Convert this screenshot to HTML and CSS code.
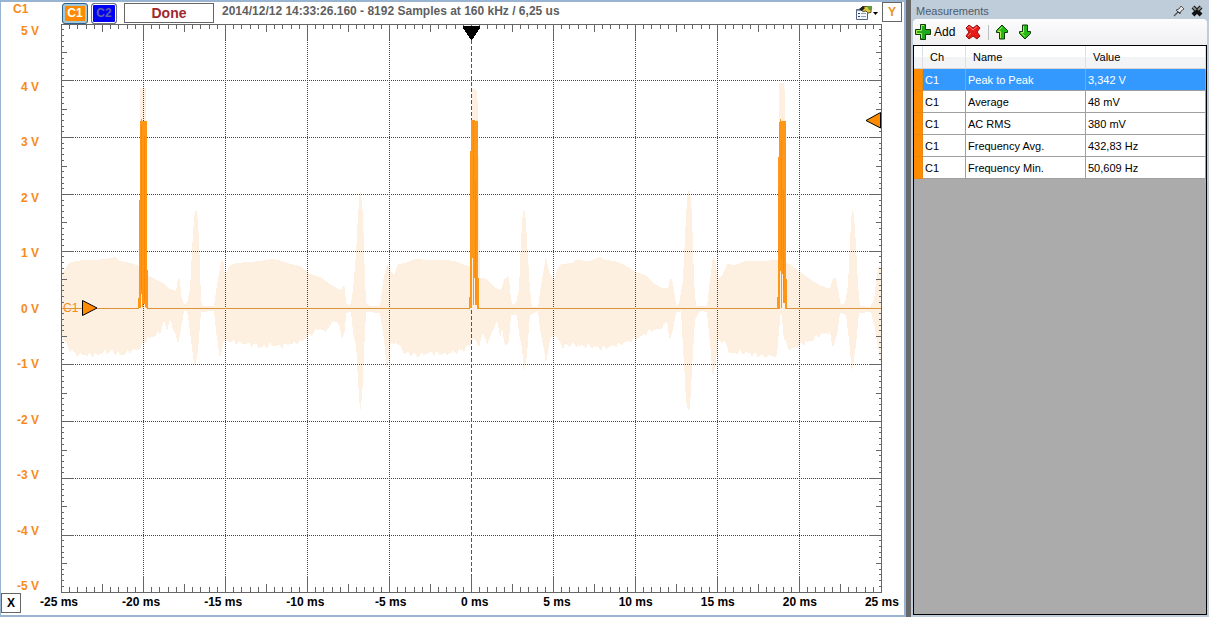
FILE: index.html
```html
<!DOCTYPE html>
<html lang="en">
<head>
<meta charset="utf-8">
<title>Oscilloscope</title>
<link rel="stylesheet" href="styles.css">
</head>
<body>
<div class="app">
  <main class="scope">
    <div class="axis-title">C1</div>
    <header class="scope-bar">
      <button class="channel channel-one active" type="button">C1</button>
      <button class="channel channel-two" type="button">C2</button>
      <output class="status">Done</output>
      <span class="capture">2014/12/12 14:33:26.160 - 8192 Samples at 160 kHz / 6,25 us</span>
      <button class="options" type="button" aria-label="Options">
        <svg width="24" height="16" viewBox="0 0 24 16">
          <path d="M1.500 4.500H12.500V14.500H1.500Z" fill="#f4f7fc" stroke="#55657f"/>
          <path d="M2 5H12V6H2Z" fill="#7c94bb"/>
          <path d="M3 8H5V9H3ZM3 11H5V12H3Z" fill="#2c3f68"/>
          <path d="M6 8.500H11M6 11.500H11" stroke="#8c9fbd"/>
          <path d="M5 4L8 1.500H14L16 3V7.500L13 8L11 6L8 6.500Z" fill="#e0c93c" stroke="#5e581c"/>
          <path d="M4 4L8 1L10 3L7 6Z" fill="#222"/>
          <path d="M12 1H17V5H14Z" fill="#5f9a35"/>
          <path d="M18 7H23L20.500 10Z" fill="#000"/>
        </svg>
      </button>
    </header>
    <button class="axis-button axis-y" type="button">Y</button>

    <div class="y-labels">
      <span>5 V</span><span>4 V</span><span>3 V</span><span>2 V</span><span>1 V</span><span>0 V</span><span>-1 V</span><span>-2 V</span><span>-3 V</span><span>-4 V</span><span>-5 V</span>
    </div>
    <svg class="plot" viewBox="61 24 821 569" preserveAspectRatio="none" role="img" aria-label="Channel 1 waveform">
      <path id="envelope" class="envelope"/>
      <path id="grid" class="grid"/>
      <path class="center" d="M471.500 40V592"/>
      <path id="ticks" class="ticks"/>
      <path class="zero" d="M62 308.500H139M147 308.500H470M479 308.500H778M787 308.500H881"/>
      <path class="pulse" d="M140 121H141V119H142V121H147V270H148V308H146L144 303L142 308V294H141V308H138V298H139V200H140Z"/>
      <path class="pulse" d="M471 120H475V121H478V278H479V309H477V305H475V278H474V305H473V258H472V308H469V297H470V151H471Z"/>
      <path class="pulse" d="M779 122H780V119H781V121H786V279H787V309H785V303H783V274H782V308H781V271H780V309H777V297H778V157H779Z"/>
      <path class="trace-core" d="M141.500 125V290M144.500 135V300M473.500 120V200M475.500 180V300M781.500 140V260M783.500 190V290"/>
      <path class="trigger-time" d="M463 26H480V28L472 40H471L463 28Z"/>
      <text class="ground-label" x="63" y="312">C1</text>
      <path class="marker" d="M82.500 300.500L97 308L82.500 315.500Z"/>
      <path class="marker" d="M880.500 112.500V128L866 120.500Z"/>
    </svg>

    <footer class="x-bar">
      <button class="axis-button" type="button">X</button>
      <div class="x-labels">
        <span>-25 ms</span><span>-20 ms</span><span>-15 ms</span><span>-10 ms</span><span>-5 ms</span><span>0 ms</span><span>5 ms</span><span>10 ms</span><span>15 ms</span><span>20 ms</span><span>25 ms</span>
      </div>
    </footer>
  </main>

  <aside class="panel">
    <header class="panel-title">
      <h2>Measurements</h2>
      <button type="button" aria-label="Pin">
        <svg width="12" height="12" viewBox="0 0 12 12">
          <path d="M1 11L5 7" stroke="#555" stroke-width="1.500"/>
          <path d="M3 5L6 4L8 1L11 4L8 6L7 9Z" fill="#ececec" stroke="#555"/>
          <path d="M4 6L7 8" stroke="#333"/>
        </svg>
      </button>
      <button type="button" aria-label="Close">
        <svg width="12" height="12" viewBox="0 0 12 12">
          <path d="M2 2L10 10M10 2L2 10" stroke="#111" stroke-width="4"/>
          <path d="M2 2L5 5M10 2L7 5" stroke="#8d8d8d" stroke-width="2"/>
        </svg>
      </button>
    </header>
    <div class="toolbar">
      <button class="add" type="button">
        <svg width="16" height="16" viewBox="0 0 16 16">
          <path d="M5.500 .5H10.500V5.500H15.500V10.500H10.500V15.500H5.500V10.500H.5V5.500H5.500Z" fill="#1fa81c" stroke="#123c08"/>
          <path d="M6.500 14V9.500H1.500V6.500H6.500V1.500H9" fill="none" stroke="#a9ee4d"/>
        </svg>
        Add
      </button>
      <button class="delete" type="button" aria-label="Delete">
        <svg width="16" height="16" viewBox="0 0 16 16">
          <path d="M1 4L4 1L8 4L12 1L15 4L12 8L15 12L12 15L8 12L4 15L1 12L4 8Z" fill="#e81b1b" stroke="#98100e" stroke-linejoin="round"/>
          <path d="M2.500 4L4 2.500L8 6L12 2.500M3 12L6 9" fill="none" stroke="#ff7b73"/>
        </svg>
      </button>
      <span class="divider"></span>
      <button class="move" type="button" aria-label="Move up">
        <svg width="14" height="16" viewBox="0 0 14 16">
          <path d="M7 1L12.500 6.500V8.500H9.500V15H4.500V8.500H1.500V6.500Z" fill="#25ba18" stroke="#12380a"/>
          <path d="M5.500 14V7.500H3L7 3" fill="none" stroke="#b2f052"/>
        </svg>
      </button>
      <button class="move" type="button" aria-label="Move down">
        <svg width="14" height="16" viewBox="0 0 14 16">
          <path d="M4.500 1H9.500V7.500H12.500V9.500L7 15L1.500 9.500V7.500H4.500Z" fill="#25ba18" stroke="#12380a"/>
          <path d="M5.500 2V8.500H3L7 12.500" fill="none" stroke="#b2f052"/>
        </svg>
      </button>
    </div>
    <div class="table-area">
      <table>
        <colgroup><col class="col-stripe"><col class="col-ch"><col class="col-name"><col></colgroup>
        <thead><tr><th></th><th>Ch</th><th>Name</th><th>Value</th></tr></thead>
        <tbody>
          <tr class="selected"><td></td><td>C1</td><td>Peak to Peak</td><td>3,342 V</td></tr>
          <tr><td></td><td>C1</td><td>Average</td><td>48 mV</td></tr>
          <tr><td></td><td>C1</td><td>AC RMS</td><td>380 mV</td></tr>
          <tr><td></td><td>C1</td><td>Frequency Avg.</td><td>432,83 Hz</td></tr>
          <tr><td></td><td>C1</td><td>Frequency Min.</td><td>50,609 Hz</td></tr>
        </tbody>
      </table>
    </div>
  </aside>
</div>
<script src="plot.js"></script>
</body>
</html>
```
FILE: plot.js
```js
const LEFT = 61, RIGHT = 881, TOP = 24, BOTTOM = 592;
const DIVISIONS = 10, SUBDIVISIONS = 10;

const rowAt = fraction => Math.floor(TOP + fraction * (BOTTOM - TOP)) + 0.5;
const columnAt = fraction => Math.round(LEFT + fraction * (RIGHT - LEFT)) + 0.5;

function tickPath() {
  let d = `M${LEFT} ${TOP + 0.5}H${RIGHT + 1}M${LEFT} ${BOTTOM + 0.5}H${RIGHT + 1}` +
    `M${LEFT + 0.5} ${TOP}V${BOTTOM}M${RIGHT + 0.5} ${TOP}V${BOTTOM}`;
  const count = DIVISIONS * SUBDIVISIONS;
  for (let i = 1; i < count; i++) {
    const major = i % 10 === 0, middle = i % 5 === 0;
    const x = columnAt(i / count), y = rowAt(i / count);
    const v = major ? 16 : middle ? 8 : 5;
    const h = major ? 13 : middle ? 6 : 3;
    d += `M${x} ${TOP}v${v}M${x} ${BOTTOM}v${-v}`;
    d += `M${LEFT} ${y}h${h}M${RIGHT + 1} ${y}h${-h}`;
  }
  return d;
}

function gridPath() {
  let d = "";
  for (let i = 1; i < DIVISIONS; i++) {
    if (i !== 5) {
      d += `M${columnAt(i / DIVISIONS)} ${TOP}V${BOTTOM}M${LEFT} ${rowAt(i / DIVISIONS)}H${RIGHT}`;
    }
  }
  return d;
}

/* Highest and lowest sample seen, as x,y pairs along the trace. */
const maxima = "62,275 68,264 75,261 85,260 95,260 105,259 115,257 120,261 130,263 140,266 140,88 146,88 147,275 155,279 163,283 170,289 176,291 178,279 180,279 181,295 184,304 187,303 190,290 192,250 194,220 195,211 197,211 199,240 201,300 203,306 214,306 217,285 221,262 223,259 225,276 229,266 236,263 250,262 260,261 272,259 282,261 290,264 300,266 310,274 320,277 330,284 338,289 341,290 343,286 345,288 346,303 348,305 351,304 353,290 356,255 358,215 360,191 361,193 363,215 364,250 366,303 369,306 380,306 382,290 384,276 387,264 389,268 394,275 398,264 405,263 415,259 430,260 445,260 455,261 468,266 472,267 472,89 474,89 477,92 478,110 479,200 480,278 487,279 495,288 501,290 505,278 509,277 511,300 513,305 516,303 519,290 521,240 523,211 525,211 527,240 530,290 532,307 538,307 541,285 545,262 546,256 549,272 554,280 557,270 561,264 572,263 575,260 590,261 600,257 605,260 615,261 625,265 635,272 645,275 655,284 662,288 668,288 670,279 672,279 674,290 676,305 679,304 683,280 686,215 688,191 690,191 692,215 694,280 696,306 707,306 710,280 713,256 715,260 718,278 722,276 727,264 735,265 745,261 760,261 779,260 779,83 784,83 785,95 786,263 790,264 800,272 810,279 820,285 830,289 833,278 836,278 839,295 841,305 845,303 848,285 850,240 852,208 854,215 856,245 858,285 860,306 870,307 874,300 877,275 879,265 881,270";
const minima = "62,335 68,348 75,354 85,355 97,355 105,352 112,352 122,355 130,351 140,348 146,340 152,337 160,333 164,320 167,331 170,319 173,330 176,333 178,346 181,330 184,311 187,311 190,330 193,355 195,368 198,350 201,312 214,311 217,340 220,358 223,342 228,341 240,343 255,345 262,347 270,345 280,346 290,344 300,342 310,335 320,328 325,332 333,321 338,323 342,338 345,330 346,313 351,312 353,335 356,345 358,380 360,411 361,408 363,380 364,350 366,312 380,313 384,340 387,371 390,345 396,342 405,353 418,355 430,353 445,354 455,352 462,351 470,344 474,338 478,346 483,335 488,343 493,330 497,321 500,337 502,328 505,348 509,340 511,315 517,315 519,335 522,350 524,373 527,355 530,315 538,311 541,335 544,350 546,364 550,340 555,335 563,347 570,344 580,346 590,346 600,348 610,347 620,344 630,341 640,337 650,331 660,329 667,321 670,340 673,330 676,313 681,311 683,345 686,400 688,410 690,408 692,370 695,320 700,311 707,312 710,345 713,378 716,360 718,340 725,342 730,354 740,352 750,354 765,356 777,356 781,310 784,340 790,350 800,345 810,341 820,335 830,332 832,348 837,335 840,313 846,315 849,340 852,373 856,345 859,313 871,312 875,330 881,365";

const parse = text => text.split(" ").map(pair => pair.split(",").map(Number));

/* The lower edge, with sampling noise every few pixels. */
function noisyEdge(points) {
  const edge = [];
  for (let i = 1; i < points.length; i++) {
    const [x0, y0] = points[i - 1], [x1, y1] = points[i];
    for (let x = x0; x < x1; x += 2) {
      const y = y0 + (y1 - y0) * (x - x0) / (x1 - x0);
      const noise = y > 325 && y < 360 ? Math.sin(x * 1.9) * 1.6 + Math.sin(x * 0.83) * 1.6 : 0;
      edge.push([x, y + noise]);
    }
  }
  edge.push(points[points.length - 1]);
  return edge;
}

const outline = parse(maxima).concat(noisyEdge(parse(minima)).reverse());
document.getElementById("envelope").setAttribute("d", "M" + outline.map(p => p.join(" ")).join("L") + "Z");
document.getElementById("grid").setAttribute("d", gridPath());
document.getElementById("ticks").setAttribute("d", tickPath());
```
FILE: styles.css
```css
* { box-sizing: border-box; }

body {
  margin: 0;
  background: #fff;
  color: #000;
  font: 11px/13px "Liberation Sans", Arial, sans-serif;
}

button {
  margin: 0;
  padding: 0;
  border: 0;
  background: none;
  color: inherit;
  font: inherit;
}

svg { display: block; }

.app {
  display: grid;
  grid-template-columns: 1fr 303px;
  height: 100vh;
  padding-bottom: 2px;
}

.scope {
  display: grid;
  grid-template-columns: 60px 1fr 22px;
  grid-template-rows: 22px 1fr 22px;
  min-width: 0;
  border: solid #99b4d1;
  border-width: 2px 2px 2px 1px;
  font-size: 12px;
  font-weight: bold;
}

.axis-title {
  padding: 1px 0 0 12px;
  color: #f68b1a;
}

.scope-bar {
  display: flex;
  align-items: center;
  gap: 3px;
  min-width: 0;
  padding-left: 1px;
}

.channel {
  width: 26px;
  height: 21px;
  border: 1px solid #777;
  border-radius: 3px;
  box-shadow: inset 0 0 0 1px #fff;
}

.channel-one { background: #ff8c00; color: #fff; }
.channel-two { background: #0000f4; color: #6262a8; }

.channel.active {
  border-color: #2c628b;
  box-shadow: inset 0 0 0 2px #a3c8dc;
}

.status {
  width: 90px;
  height: 20px;
  margin-left: 4px;
  border: 1px solid #666;
  color: #a0282d;
  font-size: 14px;
  line-height: 19px;
  text-align: center;
}

.capture {
  flex: 1;
  margin: 0 0 3px 5px;
  color: #5f5f5f;
  white-space: nowrap;
}

.options { margin-right: 3px; }

.axis-button {
  width: 20px;
  height: 20px;
  border: 1px solid #666;
}

.axis-y { color: #ee9128; }

.y-labels {
  display: flex;
  flex-direction: column;
  justify-content: space-between;
  padding: 1px 22px 0 0;
  color: #f68b1a;
  text-align: right;
}

.plot {
  grid-column: 2;
  width: 100%;
  height: 100%;
  min-height: 0;
  shape-rendering: crispEdges;
}

.envelope { fill: #fdf0e1; }

.grid, .ticks, .center, .zero, .trace-core { fill: none; }
.grid { stroke: #444; stroke-dasharray: 1 1; }
.center { stroke: #555; stroke-dasharray: 4 2; }
.ticks { stroke: #666; }
.zero { stroke: #dc9238; }
.pulse { fill: #ff9615; }
.trace-core { stroke: #ff8900; }
.trigger-time { fill: #000; }

.marker {
  fill: #ff8c00;
  stroke: #000;
  shape-rendering: auto;
}

.ground-label {
  fill: #f68b1a;
  font-size: 12px;
  font-weight: normal;
}

.x-bar {
  display: flex;
  grid-column: 1 / -1;
}

.x-labels {
  display: flex;
  flex: 1;
  justify-content: space-between;
  margin: 2px 5px 0 19px;
  line-height: 14px;
}

.x-labels span {
  width: 38px;
  text-align: right;
  white-space: nowrap;
}

.panel {
  display: flex;
  flex-direction: column;
  min-width: 0;
  padding: 0 2px 2px;
  border-left: 5px solid #69696c;
  background: #bfcddb;
}

.panel-title {
  display: flex;
  align-items: center;
  gap: 6px;
  height: 19px;
  padding: 3px 4px 0 3px;
}

.panel-title h2 {
  flex: 1;
  margin: 0;
  color: #4d5c69;
  font: inherit;
}

.toolbar {
  display: flex;
  align-items: center;
  height: 26px;
  padding-left: 2px;
  border-radius: 4px 4px 0 0;
  background: linear-gradient(#fcfcfd, #f0f0f2);
}

.add {
  display: flex;
  align-items: center;
  gap: 3px;
  font-size: 12px;
}

.delete { margin-left: 10px; }

.divider {
  width: 1px;
  height: 15px;
  margin: 0 6px 0 7px;
  background: #bdbdc5;
}

.move + .move { margin-left: 9px; }

.table-area {
  flex: 1;
  border: 1px solid #000;
  background: #ababab;
}

table {
  width: 100%;
  border-collapse: separate;
  border-spacing: 0;
  table-layout: fixed;
  background: #fff;
}

.col-stripe { width: 9px; }
.col-ch { width: 43px; }
.col-name { width: 120px; }

th, td {
  height: 22px;
  padding: 1px 2px 0;
  border-right: 1px solid #a0a0a0;
  border-bottom: 1px solid #a0a0a0;
  text-align: left;
}

th {
  height: 23px;
  padding: 1px 7px 0;
  border-right-color: #dedfe1;
  border-bottom-color: #d5d5d5;
  background: linear-gradient(#fff 50%, #f3f4f6 50%);
  font-weight: normal;
}

th:first-child, td:first-child { padding: 0; }
td:first-child { background: #ff8c00; border-color: #e88812; }

.selected td:not(:first-child) {
  background: #3399ff;
  color: #fff;
}
```
